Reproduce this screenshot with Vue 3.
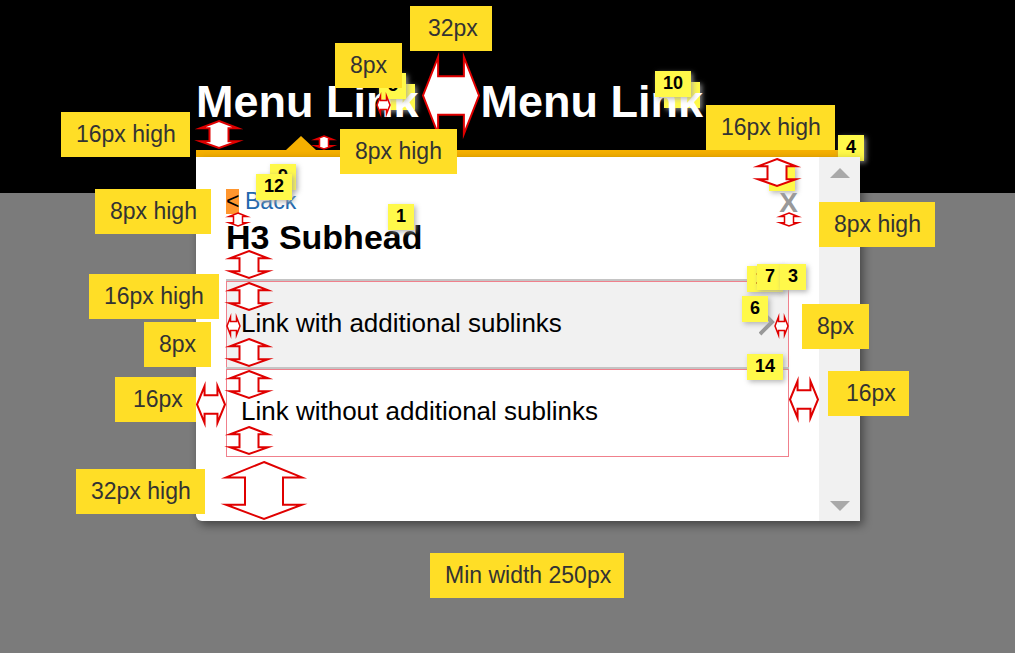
<script setup>
const links = ['Link with additional sublinks', 'Link without additional sublinks']

const badgesBelow = [
  { text: '', x: 379, y: 84, wide: true },
  { text: '', x: 664, y: 82, wide: true },
]

const badgesMiddle = [{ text: '4', x: 838, y: 135 }]

const badges = [
  { text: '5', x: 380, y: 73 },
  { text: '10', x: 655, y: 71, wide: true },
  { text: '9', x: 270, y: 164 },
  { text: '12', x: 256, y: 174, wide: true },
  { text: '1', x: 388, y: 204 },
  { text: '', x: 769, y: 165 },
  { text: '11', x: 747, y: 266, wide: true },
  { text: '7', x: 757, y: 264 },
  { text: '3', x: 780, y: 264 },
  { text: '6', x: 742, y: 296 },
  { text: '14', x: 747, y: 354, wide: true },
]

const arrows = [
  { dir: 'h', x: 423, y: 57, w: 56, h: 77 },
  { dir: 'h', x: 377, y: 96, w: 13, h: 18, small: true },
  { dir: 'v', x: 200, y: 121, w: 38, h: 27 },
  { dir: 'v', x: 315, y: 136, w: 18, h: 13, small: true },
  { dir: 'v', x: 758, y: 159, w: 38, h: 27 },
  { dir: 'v', x: 780, y: 213, w: 18, h: 13, small: true },
  { dir: 'v', x: 229, y: 213, w: 18, h: 13, small: true },
  { dir: 'v', x: 230, y: 251, w: 38, h: 27 },
  { dir: 'v', x: 230, y: 283, w: 38, h: 27 },
  { dir: 'v', x: 230, y: 339, w: 38, h: 27 },
  { dir: 'v', x: 230, y: 371, w: 38, h: 27 },
  { dir: 'v', x: 230, y: 427, w: 38, h: 27 },
  { dir: 'v', x: 226, y: 462, w: 76, h: 57 },
  { dir: 'h', x: 227, y: 317, w: 13, h: 18, small: true },
  { dir: 'h', x: 775, y: 317, w: 13, h: 18, small: true },
  { dir: 'h', x: 197, y: 386, w: 28, h: 37 },
  { dir: 'h', x: 790, y: 381, w: 28, h: 37 },
]

const notes = [
  { text: '8px', x: 335, y: 43, w: 67 },
  { text: '32px', x: 410, y: 6, w: 82, wide: true },
  { text: '16px high', x: 61, y: 112, w: 129 },
  { text: '8px high', x: 340, y: 129, w: 117 },
  { text: '16px high', x: 706, y: 105, w: 129 },
  { text: '8px high', x: 95, y: 189, w: 116 },
  { text: '8px high', x: 819, y: 202, w: 116 },
  { text: '16px high', x: 89, y: 274, w: 130 },
  { text: '8px', x: 144, y: 322, w: 67 },
  { text: '8px', x: 802, y: 304, w: 67 },
  { text: '16px', x: 115, y: 377, w: 81, wide: true },
  { text: '16px', x: 828, y: 371, w: 81, wide: true },
  { text: '32px high', x: 76, y: 469, w: 129 },
  { text: 'Min width 250px', x: 430, y: 553, w: 194 },
]

const at = (o) => ({ left: o.x + 'px', top: o.y + 'px' })
const boxOf = (o) => ({ ...at(o), width: o.w + 'px', height: o.h + 'px' })
const noteBox = (o) => ({ ...at(o), width: o.w + 'px' })
const shapes = {
  v: '50,0 100,27 75,27 75,75 100,75 50,100 0,75 25,75 25,27 0,27',
  h: '0,50 27,0 27,25 73,25 73,0 100,50 73,100 73,75 27,75 27,100',
}
</script>

<template>
  <div class="page">
    <div class="layer">
      <span v-for="(b, i) in badgesBelow" :key="i" class="badge" :class="{ wide: b.wide }" :style="at(b)">{{ b.text }}</span>
    </div>
    <div class="layer middle">
      <span v-for="b in badgesMiddle" :key="b.text" class="badge" :style="at(b)">{{ b.text }}</span>
    </div>
    <div class="content">
      <nav class="menu">
        <a href="#" class="active">Menu Link</a>
        <a href="#">Menu Link</a>
      </nav>
      <section class="panel">
        <div class="body">
          <div class="top">
            <a href="#" class="back"><span class="chevron">&lt;</span>Back</a>
            <button type="button" class="close">X</button>
          </div>
          <h3>H3 Subhead</h3>
          <ul class="links">
            <li v-for="(l, i) in links" :key="l">
              <a href="#">{{ l }}
                <svg v-if="i === 0" class="next" viewBox="0 0 16 28"><path d="M2 2 L13 13 L1 25" /></svg>
              </a>
            </li>
          </ul>
        </div>
        <div class="scroll">
          <svg viewBox="0 0 20 10"><path d="M0 10 L10 0 L20 10Z" /></svg>
          <svg viewBox="0 0 20 10"><path d="M0 0 L10 10 L20 0Z" /></svg>
        </div>
      </section>
    </div>
    <div class="layer front">
      <span v-for="(b, i) in badges" :key="i" class="badge" :class="{ wide: b.wide }" :style="at(b)">{{ b.text }}</span>
      <svg v-for="(a, i) in arrows" :key="i" class="arrow" :class="{ small: a.small }" viewBox="0 0 100 100" preserveAspectRatio="none" :style="boxOf(a)">
        <polygon :points="shapes[a.dir]" />
      </svg>
      <span v-for="(n, i) in notes" :key="i" class="note" :class="{ wide: n.wide }" :style="noteBox(n)">{{ n.text }}</span>
    </div>
  </div>
</template>

<style>
body {
  background: #7b7b7b;
}
</style>

<style scoped>
.page {
  position: relative;
  min-height: 100vh;
  overflow: hidden;
  background: linear-gradient(#000 193px, #7b7b7b 193px);
  font-family: "Liberation Sans", Arial, sans-serif;
}
.page * {
  box-sizing: border-box;
}
.layer {
  position: absolute;
  inset: 0;
  pointer-events: none;
}
.layer.middle {
  z-index: 2;
}
.layer.front {
  z-index: 4;
}
.content {
  padding: 77px 155px 0 196px;
}
.menu {
  position: relative;
  z-index: 1;
  display: flex;
  gap: 62px;
  height: 80px;
  border-bottom: 7px solid #f5b000;
}
.menu a {
  position: relative;
  color: #fff;
  font-size: 45px;
  font-weight: bold;
  line-height: 50px;
  text-decoration: none;
  white-space: nowrap;
}
.menu .active::after {
  content: "";
  position: absolute;
  left: 90px;
  bottom: 0;
  border: 15px solid transparent;
  border-top: 0;
  border-bottom: 14px solid #f5b000;
}
.panel {
  position: relative;
  z-index: 3;
  display: flex;
  border-radius: 0 0 0 6px;
  background: #fff;
  box-shadow: 3px 4px 10px rgba(0, 0, 0, 0.45);
}
.body {
  flex: 1;
  padding: 32px 30px 64px;
}
.top {
  display: flex;
  justify-content: space-between;
  height: 28px;
}
.back {
  display: flex;
  gap: 6px;
  color: #2167ae;
  font-size: 23px;
  line-height: 25px;
  text-decoration: none;
}
.chevron {
  width: 13px;
  height: 25px;
  background: #ff962e;
  color: #000;
}
.close {
  margin-right: -9px;
  padding: 0;
  border: 0;
  background: none;
  color: #999;
  font: bold 28px/24px "Liberation Sans", Arial, sans-serif;
}
h3 {
  margin: 0;
  font-size: 34px;
  line-height: 40px;
}
.links {
  margin: 22px 0 0;
  padding: 0;
  list-style: none;
}
.links li {
  border: 1px solid #f0808c;
  border-top: 0;
}
.links li:first-child {
  border-bottom: 0;
  background: #f1f1f1;
}
.links li:last-child {
  padding-bottom: 1px;
}
.links a {
  display: flex;
  align-items: center;
  justify-content: space-between;
  height: 88px;
  margin: 0 -1px;
  padding: 0 14px 2px 15px;
  border-top: 2px solid #c4c4c4;
  color: #000;
  font-size: 26px;
  text-decoration: none;
  box-shadow: inset 1px 1px #f0808c, inset -1px 0 #f0808c;
}
.next {
  width: 16px;
  height: 28px;
  fill: none;
  stroke: #999;
  stroke-width: 4;
}
.scroll {
  display: flex;
  flex-direction: column;
  align-items: center;
  justify-content: space-between;
  width: 41px;
  padding: 11px 0 10px;
  background: #f1f1f1;
}
.scroll svg {
  width: 20px;
  height: 10px;
  fill: #a9a9a9;
}
.badge {
  position: absolute;
  width: 26px;
  height: 26px;
  background: #fff94a;
  box-shadow: 2px 2px 5px rgba(165, 165, 165, 0.8);
  color: #000;
  font-size: 18px;
  font-weight: bold;
  line-height: 25px;
  text-align: center;
}
.badge.wide {
  width: 36px;
}
.arrow {
  position: absolute;
  overflow: visible;
  fill: #fff;
  stroke: #e00000;
  stroke-width: 2;
  stroke-miterlimit: 10;
}
.arrow.small {
  stroke-width: 1.5;
}
.arrow polygon {
  vector-effect: non-scaling-stroke;
}
.note {
  position: absolute;
  height: 45px;
  padding-left: 15px;
  background: #ffde26;
  color: #333;
  font-size: 23px;
  line-height: 44px;
  white-space: nowrap;
}
.note.wide {
  padding-left: 18px;
}
</style>
